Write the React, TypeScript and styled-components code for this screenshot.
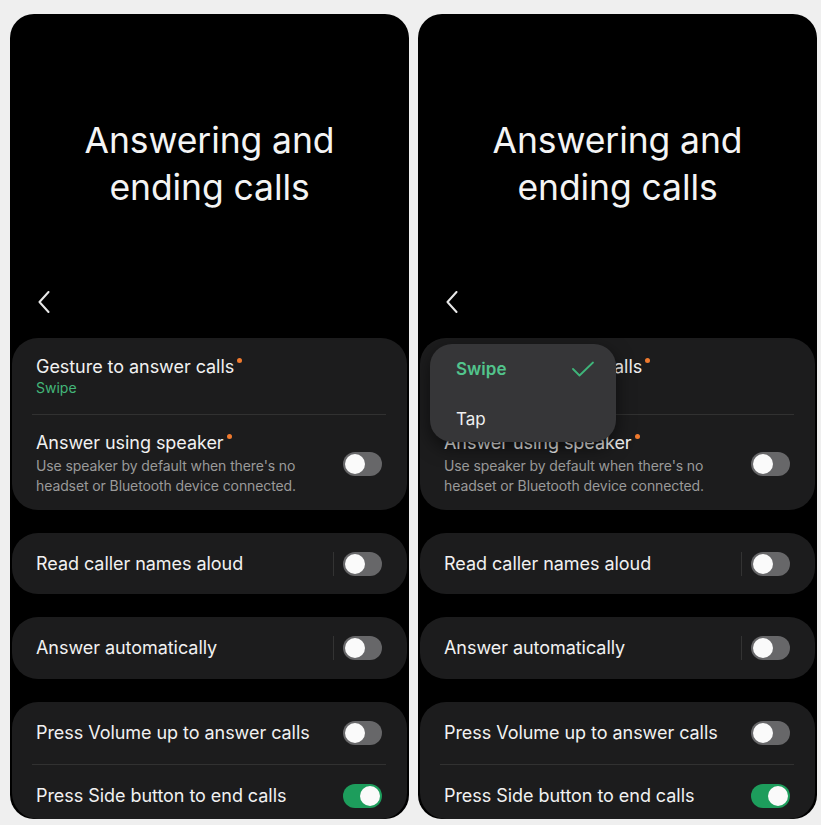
import React from "react";
import styled, {createGlobalStyle} from "styled-components";

const GlobalStyle = createGlobalStyle`
  html, body {
    margin: 0;
    padding: 0;
    background: #efefef;
  }

  body {
    font-family: Inter, Roboto, "Noto Sans", "Liberation Sans", sans-serif;
    -webkit-font-smoothing: antialiased;
  }
`;

const Page = styled.div`
  display: flex;
  flex-flow: row nowrap;
  gap: 9px;
  padding: 14px 4px 7px 10px;
  width: 821px;
  box-sizing: border-box;
`;

const Phone = styled.div`
  position: relative;
  display: flex;
  flex-flow: column nowrap;
  width: 399px;
  background: #000;
  border-radius: 24px;
  overflow: hidden;
`;

const Title = styled.h1`
  margin: 103px 0 0;
  color: #f4f4f4;
  font-weight: 400;
  font-size: 35.5px;
  line-height: 47px;
  text-align: center;
  letter-spacing: -0.1px;
`;

const BackRow = styled.div`
  display: flex;
  align-items: center;
  height: 22px;
  margin: 80px 0 25px;
  padding-left: 28px;
`;

const CardList = styled.div`
  display: flex;
  flex-flow: column nowrap;
  gap: 23px;
  padding: 0 2px;
`;

const Card = styled.div`
  display: flex;
  flex-flow: column nowrap;
  background: #1c1c1d;
  border-radius: 26px;
`;

const Row = styled.div<{ $minHeight?: number; $padTop?: number; $padBottom?: number; $align?: string }>`
  display: flex;
  flex-flow: row nowrap;
  align-items: ${p => p.$align ?? "center"};
  min-height: ${p => p.$minHeight ?? 0}px;
  padding: ${p => p.$padTop ?? 0}px 25px ${p => p.$padBottom ?? 0}px 24px;
  box-sizing: border-box;
`;

const RowText = styled.div`
  display: flex;
  flex-flow: column nowrap;
  flex: 1;
  min-width: 0;
`;

const Label = styled.div`
  color: #f1f1f1;
  font-size: 18px;
  line-height: 22px;
  letter-spacing: -0.05px;
`;

const Dot = styled.span`
  display: inline-block;
  width: 5px;
  height: 5px;
  margin: 2px 0 0 3px;
  border-radius: 50%;
  background: #f07a2e;
  vertical-align: top;
`;

const Value = styled.div`
  color: #43b679;
  font-size: 14px;
  line-height: 20px;
`;

const Hint = styled.div`
  margin-top: 2px;
  color: #9a9a9a;
  font-size: 14px;
  line-height: 20px;
  letter-spacing: -0.1px;
`;

const Divider = styled.div`
  height: 1px;
  margin: 0 21px 0 20px;
  background: #313131;
`;

const VBar = styled.div`
  width: 1px;
  height: 24px;
  margin-right: 9px;
  background: #333;
`;

const Track = styled.div<{ $on?: boolean }>`
  display: flex;
  flex: none;
  justify-content: ${p => (p.$on ? "flex-end" : "flex-start")};
  align-items: center;
  width: 39px;
  height: 24px;
  padding: 0 2px;
  box-sizing: border-box;
  border-radius: 12px;
  background: ${p => (p.$on ? "#1d9d5c" : "#676769")};
`;

const Knob = styled.div`
  width: 20px;
  height: 20px;
  border-radius: 50%;
  background: #fafafa;
`;

const Popup = styled.div`
  position: absolute;
  top: 330px;
  left: 12px;
  width: 186px;
  padding-top: 1px;
  display: flex;
  flex-flow: column nowrap;
  background: #363638;
  border-radius: 22px;
  box-shadow: 0 6px 18px rgba(0, 0, 0, 0.55);
`;

const Option = styled.div<{ $selected?: boolean }>`
  display: flex;
  align-items: center;
  justify-content: space-between;
  height: ${p => (p.$selected ? 48 : 49)}px;
  padding: ${p => (p.$selected ? 0 : 2)}px 22px 0 26px;
  box-sizing: border-box;
  color: ${p => (p.$selected ? "#52c48c" : "#f0f0f0")};
  font-size: 17px;
  font-weight: ${p => (p.$selected ? 600 : 400)};
`;

const Toggle: React.FC<{ on?: boolean }> = ({on}) => (
    <Track $on={on}><Knob/></Track>
);

const Chevron = () => (
    <svg width="12" height="22" viewBox="0 0 12 22">
        <polyline points="10.5,1 1.5,11 10.5,21" fill="none" stroke="#e8e8e8" strokeWidth="2"
                  strokeLinecap="round" strokeLinejoin="round"/>
    </svg>
);

const Check = () => (
    <svg width="22" height="16" viewBox="0 0 22 16">
        <polyline points="1,8 7.5,14.5 21,1.5" fill="none" stroke="#3fb57a" strokeWidth="1.8"
                  strokeLinecap="round" strokeLinejoin="round"/>
    </svg>
);

const Screen: React.FC<{ withMenu?: boolean }> = ({withMenu}) => (
    <Phone>
        <Title>Answering and<br/>ending calls</Title>
        <BackRow><Chevron/></BackRow>
        <CardList>
            <Card>
                <Row $padTop={18} $padBottom={16} $align="flex-start">
                    <RowText>
                        <Label>Gesture to answer calls<Dot/></Label>
                        <Value>Swipe</Value>
                    </RowText>
                </Row>
                <Divider/>
                <Row $padTop={17} $padBottom={14}>
                    <RowText>
                        <Label>Answer using speaker<Dot/></Label>
                        <Hint>Use speaker by default when there's no<br/>headset or Bluetooth device connected.</Hint>
                    </RowText>
                    <Toggle/>
                </Row>
            </Card>
            <Card>
                <Row $minHeight={61}>
                    <RowText><Label>Read caller names aloud</Label></RowText>
                    <VBar/>
                    <Toggle/>
                </Row>
            </Card>
            <Card>
                <Row $minHeight={62}>
                    <RowText><Label>Answer automatically</Label></RowText>
                    <VBar/>
                    <Toggle/>
                </Row>
            </Card>
            <Card>
                <Row $minHeight={62}>
                    <RowText><Label>Press Volume up to answer calls</Label></RowText>
                    <Toggle/>
                </Row>
                <Divider/>
                <Row $padTop={19} $padBottom={11}>
                    <RowText><Label>Press Side button to end calls</Label></RowText>
                    <Toggle on/>
                </Row>
            </Card>
        </CardList>
        {withMenu ? (
            <Popup>
                <Option $selected>Swipe<Check/></Option>
                <Option>Tap</Option>
            </Popup>
        ) : null}
    </Phone>
);

export default function App() {
    return (
        <>
            <GlobalStyle/>
            <Page>
                <Screen/>
                <Screen withMenu/>
            </Page>
        </>
    );
}
